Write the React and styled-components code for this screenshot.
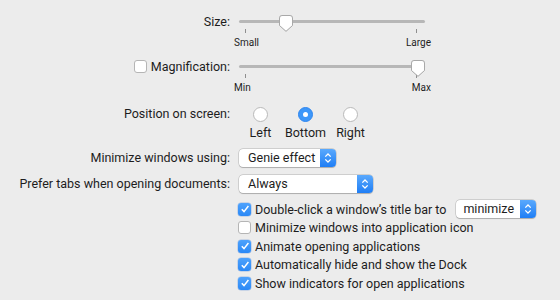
import React from "react";
import styled, { createGlobalStyle } from "styled-components";

const GlobalStyle = createGlobalStyle`
  html, body {
    margin: 0;
    padding: 0;
    background: #ececec;
  }
  body {
    font-family: Roboto, "Liberation Sans", sans-serif;
    font-size: 12.5px;
    color: #1d1d1d;
    -webkit-font-smoothing: antialiased;
  }
`;

export default function App() {
  return (
    <>
      <GlobalStyle />
      <Page>
        <Row $top={13}>
          <Label>Size:</Label>
          <Control>
            <Slider value={0.23} ticks={["Small", "Large"]} />
          </Control>
        </Row>

        <Row $top={10}>
          <Label>
            <CheckBox />
            Magnification:
          </Label>
          <Control>
            <Slider value={1} ticks={["Min", "Max"]} />
          </Control>
        </Row>

        <Row $top={12}>
          <Label>Position on screen:</Label>
          <Control>
            <RadioGroup>
              <RadioItem>
                <Radio />
                <span>Left</span>
              </RadioItem>
              <RadioItem>
                <Radio $on />
                <span>Bottom</span>
              </RadioItem>
              <RadioItem>
                <Radio />
                <span>Right</span>
              </RadioItem>
            </RadioGroup>
          </Control>
        </Row>

        <Row $top={9}>
          <Label $mid>Minimize windows using:</Label>
          <Control>
            <Popup width={97} text="Genie effect" />
          </Control>
        </Row>

        <Row $top={8}>
          <Label $mid>Prefer tabs when opening documents:</Label>
          <Control>
            <Popup width={134} text="Always" />
          </Control>
        </Row>

        <CheckList>
          <CheckRow $tall>
            <CheckBox $on />
            Double-click a window’s title bar to
            <PopupGap>
              <Popup width={80} pad={7} text="minimize" />
            </PopupGap>
          </CheckRow>
          <CheckRow>
            <CheckBox />
            Minimize windows into application icon
          </CheckRow>
          <CheckRow>
            <CheckBox $on />
            Animate opening applications
          </CheckRow>
          <CheckRow>
            <CheckBox $on />
            Automatically hide and show the Dock
          </CheckRow>
          <CheckRow>
            <CheckBox $on />
            Show indicators for open applications
          </CheckRow>
        </CheckList>
      </Page>
    </>
  );
}

function Slider({ value, ticks }) {
  return (
    <SliderBox>
      <TrackWrap>
        <Track />
        <Knob style={{ left: `${value * 172}px` }}>
          <svg width="14" height="17" viewBox="0 0 14 17">
            <path
              d="M3 0.5 H11 A2.5 2.5 0 0 1 13.5 3 V10.5 L7 16.3 L0.5 10.5 V3 A2.5 2.5 0 0 1 3 0.5 Z"
              fill="#fff"
              stroke="#a9a9a9"
              strokeWidth="1"
            />
          </svg>
        </Knob>
      </TrackWrap>
      <Ticks>
        <Tick />
        <Tick />
      </Ticks>
      <TickLabels>
        {ticks.map((t) => (
          <TickLabel key={t}>{t}</TickLabel>
        ))}
      </TickLabels>
    </SliderBox>
  );
}

function Popup({ width, text, pad = 9 }) {
  return (
    <PopupBox style={{ width }}>
      <PopupText $pad={pad}>{text}</PopupText>
      <PopupArrows>
        <svg width="8" height="12" viewBox="0 0 8 12">
          <path d="M1.3 4.6 L4 2 L6.7 4.6" fill="none" stroke="#fff" strokeWidth="1.3" />
          <path d="M1.3 7.4 L4 10 L6.7 7.4" fill="none" stroke="#fff" strokeWidth="1.3" />
        </svg>
      </PopupArrows>
    </PopupBox>
  );
}

function CheckBox({ $on }) {
  return (
    <Box $on={$on}>
      {$on && (
        <svg width="10" height="10" viewBox="0 0 10 10">
          <path d="M1.8 5.3 L4 7.6 L8.4 2" fill="none" stroke="#fff" strokeWidth="1.5" />
        </svg>
      )}
    </Box>
  );
}

const Page = styled.div`
  width: 560px;
  height: 300px;
  overflow: hidden;
  padding-top: 0.5px;
  box-sizing: border-box;
`;

const Row = styled.div`
  display: flex;
  align-items: flex-start;
  margin-top: ${(p) => p.$top}px;
`;

const Label = styled.div`
  width: 230px;
  flex-shrink: 0;
  display: flex;
  align-items: center;
  justify-content: flex-end;
  line-height: 15px;
  white-space: nowrap;
  padding-top: ${(p) => (p.$mid ? "1.5px" : "0")};
`;

const Control = styled.div`
  margin-left: 9px;
`;

const SliderBox = styled.div`
  width: 186px;
`;

const TrackWrap = styled.div`
  position: relative;
  height: 15px;
`;

const Track = styled.div`
  position: absolute;
  left: 0;
  right: 0;
  top: 6px;
  height: 3px;
  border-radius: 2px;
  background: #b7b7b7;
`;

const Knob = styled.div`
  position: absolute;
  top: 1px;
  width: 14px;
  height: 17px;
  display: flex;
  filter: drop-shadow(0 0.5px 0.5px rgba(0, 0, 0, 0.12));
`;

const Ticks = styled.div`
  display: flex;
  justify-content: space-between;
  padding: 0 8px 0 6px;
  height: 4px;
`;

const Tick = styled.div`
  width: 1px;
  height: 4px;
  background: #8e8e8e;
`;

const TickLabels = styled.div`
  display: flex;
  justify-content: space-between;
  font-size: 10px;
  line-height: 12px;
  margin: 4px -6px 0 -5px;
`;

const TickLabel = styled.span``;

const RadioGroup = styled.div`
  display: flex;
  margin-left: -1px;
`;

const RadioItem = styled.div`
  width: 45px;
  display: flex;
  flex-direction: column;
  align-items: center;
  span {
    margin-top: 3px;
    line-height: 15px;
  }
`;

const Radio = styled.div`
  width: 15px;
  height: 15px;
  margin-top: 1px;
  border-radius: 50%;
  box-sizing: border-box;
  background: ${(p) => (p.$on ? "#3d97f9" : "#fff")};
  border: 1px solid ${(p) => (p.$on ? "#2f86ef" : "#b9b9b9")};
  display: flex;
  align-items: center;
  justify-content: center;
  &::after {
    content: "";
    display: ${(p) => (p.$on ? "block" : "none")};
    width: 5px;
    height: 5px;
    border-radius: 50%;
    background: #fff;
  }
`;

const PopupBox = styled.div`
  height: 18px;
  display: flex;
  background: #fff;
  border-radius: 4px;
  box-shadow: 0 0 0 0.5px rgba(0, 0, 0, 0.22), 0 0.5px 1px rgba(0, 0, 0, 0.18);
  overflow: hidden;
  box-sizing: border-box;
`;

const PopupText = styled.div`
  flex: 1;
  padding-left: ${(p) => p.$pad}px;
  line-height: 18px;
  white-space: nowrap;
`;

const PopupArrows = styled.div`
  width: 16px;
  display: flex;
  align-items: center;
  justify-content: center;
  background: linear-gradient(#5aa9fd, #1f7ef5);
`;

const CheckList = styled.div`
  margin-top: 7px;
  margin-left: 238px;
`;

const CheckRow = styled.div`
  display: flex;
  align-items: center;
  height: ${(p) => (p.$tall ? "19px" : "18.5px")};
  white-space: nowrap;
`;

const PopupGap = styled.div`
  margin-left: 10px;
`;

const Box = styled.div`
  width: 13px;
  height: 13px;
  flex-shrink: 0;
  margin-right: 4px;
  box-sizing: border-box;
  border-radius: 3px;
  display: flex;
  align-items: center;
  justify-content: center;
  background: ${(p) => (p.$on ? "linear-gradient(#4ea2fc, #2a88f6)" : "#fff")};
  border: ${(p) => (p.$on ? "none" : "1px solid #b5b5b5")};
  box-shadow: ${(p) => (p.$on ? "0 0 0 0.5px rgba(0,80,200,0.3)" : "none")};
`;
